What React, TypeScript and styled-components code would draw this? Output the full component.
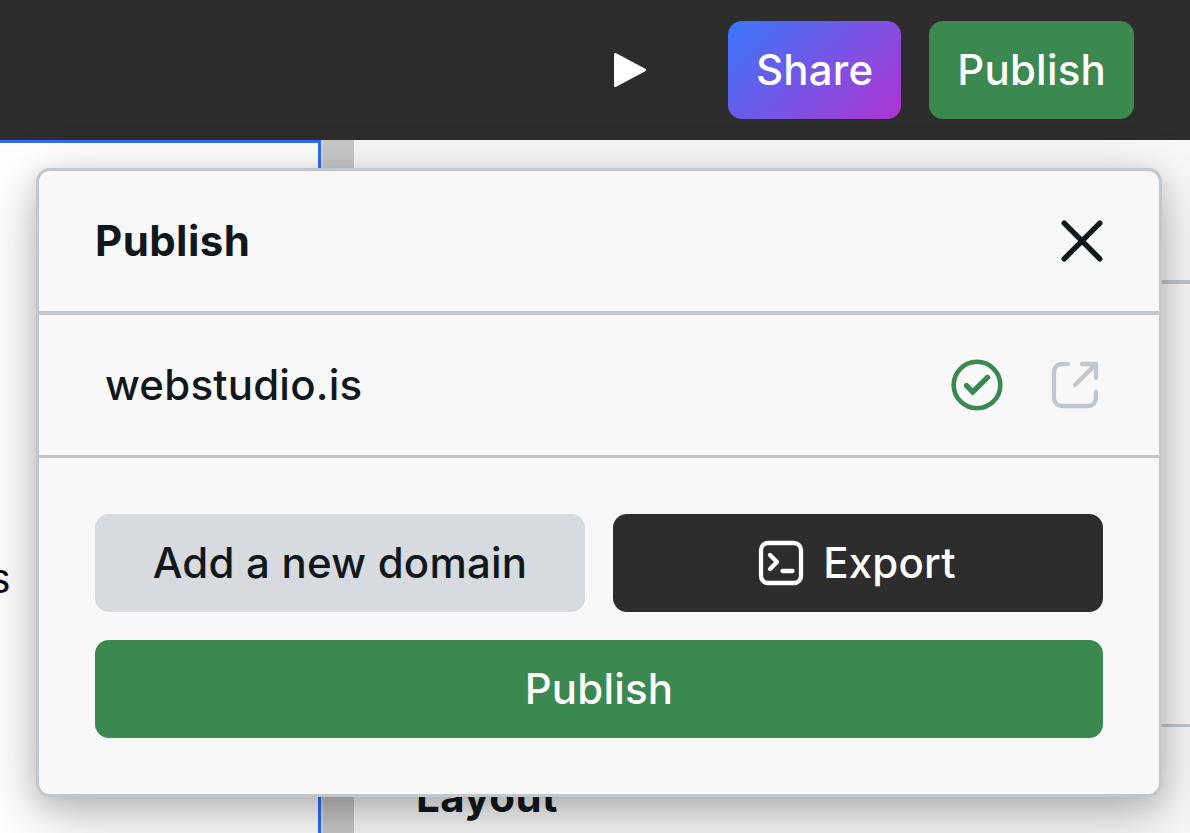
import React from "react";
import styled, { createGlobalStyle, css } from "styled-components";

const color = {
  bar: "#2d2d2d",
  panel: "#f8f8f8",
  line: "#c1c8cd",
  text: "#11181c",
  green: "#3b8850",
  neutral: "#d7dbdf",
  blue: "#2f6bff",
};

const GlobalStyle = createGlobalStyle`
  *, *::before, *::after { box-sizing: border-box; }
  body {
    margin: 0;
    overflow: hidden;
    font-family: Inter, "Liberation Sans", sans-serif;
    font-size: 42px;
    line-height: 56px;
    letter-spacing: 0.005em;
    color: ${color.text};
  }
`;

const Page = styled.div`
  position: relative;
  display: flex;
  flex-direction: column;
  height: 100vh;
  overflow: hidden;
`;

const Topbar = styled.header`
  display: flex;
  flex: none;
  align-items: center;
  justify-content: flex-end;
  gap: 28px;
  height: 140px;
  padding: 0 56px;
  background: ${color.bar};
`;

const IconButton = styled.button<{ $width: number }>`
  display: flex;
  align-items: center;
  justify-content: center;
  width: ${(p) => p.$width}px;
  height: 56px;
  padding: 0;
  border: 0;
  background: none;
  color: inherit;
`;

type Tone = "gradient" | "positive" | "neutral" | "dark";

const tones = {
  gradient: css`
    background: linear-gradient(135deg, #3a76fa 0%, #b035d2 100%);
    color: #fff;
  `,
  positive: css`
    background: ${color.green};
    color: #fff;
  `,
  neutral: css`
    background: ${color.neutral};
    color: ${color.text};
  `,
  dark: css`
    background: ${color.bar};
    color: #fff;
  `,
};

const Button = styled.button<{ $tone: Tone }>`
  display: flex;
  align-items: center;
  justify-content: center;
  gap: 7px;
  height: 98px;
  padding: 0 21px;
  border: 0;
  border-radius: 14px;
  font: inherit;
  font-weight: 500;
  letter-spacing: inherit;
  white-space: nowrap;
  ${(p) => tones[p.$tone]}
`;

const ButtonText = styled.span`
  padding: 0 7px;
`;

const Workspace = styled.main`
  display: flex;
  flex: 1;
  min-height: 0;
`;

const Canvas = styled.section`
  flex: 1;
  min-width: 0;
  overflow: hidden;
  padding-top: 408px;
  border-top: 3px solid ${color.blue};
  border-right: 3px solid ${color.blue};
  background: #fff;
`;

const CanvasText = styled.p`
  margin: 0 0 0 -11px;
  font-family: "Liberation Sans", sans-serif;
  color: #000;
`;

const Gutter = styled.div`
  flex: none;
  width: 32px;
  border-left: 2px solid #d5dbe0;
  background: #c8c8c8;
`;

const Sidebar = styled.aside`
  flex: none;
  width: 837px;
  border-left: 1px solid ${color.line};
  background: ${color.panel};
`;

const SidebarSection = styled.section<{ $height: number; $line: number }>`
  height: ${(p) => p.$height}px;
  padding: 42px 62px;
  border-bottom: ${(p) => p.$line}px solid ${color.line};
`;

const Heading = styled.h2`
  margin: 0;
  font-size: 42px;
  line-height: 56px;
  font-weight: 700;
  letter-spacing: 0.01em;
`;

const Popover = styled.div`
  position: absolute;
  top: 168px;
  left: 36px;
  right: 28px;
  border: 3px solid ${color.line};
  border-radius: 14px;
  background: ${color.panel};
  box-shadow: 0 7px 24px rgba(0, 0, 0, 0.12), 0 18px 60px rgba(0, 0, 0, 0.25);
`;

const PopoverHeader = styled.div`
  display: flex;
  align-items: center;
  justify-content: space-between;
  height: 144px;
  padding: 0 49px 0 56px;
  border-bottom: 4px solid ${color.line};
`;

const DomainRow = styled.div`
  display: flex;
  align-items: center;
  gap: 42px;
  height: 143px;
  padding: 0 56px 0 66px;
  border-bottom: 3px solid ${color.line};
`;

const DomainName = styled.span`
  flex: 1;
  font-weight: 500;
`;

const StatusIcon = styled.span`
  display: flex;
  color: ${color.green};
`;

const ExternalLink = styled.a`
  display: flex;
  color: ${color.line};
`;

const Actions = styled.div`
  display: grid;
  grid-template-columns: 1fr 1fr;
  gap: 28px;
  padding: 56px;

  & > :last-child {
    grid-column: 1 / -1;
  }
`;

const Svg = styled.svg.attrs({
  width: 56,
  height: 56,
  viewBox: "0 0 56 56",
  fill: "none",
  stroke: "currentColor",
  "aria-hidden": true,
})`
  display: block;
  flex: none;
`;

const PlayIcon = () => (
  <Svg>
    <path
      d="M13.5 12.5v31l29-15.500z"
      fill="#fff"
      stroke="#fff"
      strokeWidth="3"
      strokeLinejoin="round"
    />
  </Svg>
);

const CloseIcon = () => (
  <Svg strokeWidth="5.400" strokeLinecap="round">
    <path d="M10.200 10.200l35.600 35.600M45.800 10.200L10.200 45.800" />
  </Svg>
);

const CheckIcon = () => (
  <Svg strokeWidth="4.600">
    <circle cx="28" cy="28" r="23.300" />
    <path d="M17.500 28.700l6.200 6.200 14.800-14.600" strokeWidth="5.400" strokeLinecap="round" />
  </Svg>
);

const ExternalIcon = () => (
  <Svg strokeWidth="4.300" strokeLinecap="round" strokeLinejoin="round">
    <path d="M21 7h-6.500a7.500 8 0 0 0-7.500 8v26a8 8 0 0 0 8 8H41a8 8 0 0 0 8-8v-6M35 7h14v14M49 7L28 28" />
  </Svg>
);

const TerminalIcon = () => (
  <Svg strokeWidth="4.300" strokeLinecap="round" strokeLinejoin="round">
    <rect x="8" y="8" width="40" height="40" rx="7" />
    <path d="M17 20l7 7-7 7M29.500 36H39.500" />
  </Svg>
);

export default function App() {
  return (
    <Page>
      <GlobalStyle />
      <Topbar>
        <IconButton $width={140} aria-label="Preview">
          <PlayIcon />
        </IconButton>
        <Button $tone="gradient">
          <ButtonText>Share</ButtonText>
        </Button>
        <Button $tone="positive">
          <ButtonText>Publish</ButtonText>
        </Button>
      </Topbar>
      <Workspace>
        <Canvas>
          <CanvasText>s</CanvasText>
        </Canvas>
        <Gutter />
        <Sidebar>
          <SidebarSection $height={144} $line={4} />
          <SidebarSection $height={443} $line={3} />
          <SidebarSection $height={144} $line={4}>
            <Heading>Layout</Heading>
          </SidebarSection>
        </Sidebar>
      </Workspace>
      <Popover role="dialog" aria-labelledby="publish-title">
        <PopoverHeader>
          <Heading id="publish-title">Publish</Heading>
          <IconButton $width={56} aria-label="Close">
            <CloseIcon />
          </IconButton>
        </PopoverHeader>
        <DomainRow>
          <DomainName>webstudio.is</DomainName>
          <StatusIcon>
            <CheckIcon />
          </StatusIcon>
          <ExternalLink href="#" aria-label="Open webstudio.is">
            <ExternalIcon />
          </ExternalLink>
        </DomainRow>
        <Actions>
          <Button $tone="neutral">
            <ButtonText>Add a new domain</ButtonText>
          </Button>
          <Button $tone="dark">
            <TerminalIcon />
            <ButtonText>Export</ButtonText>
          </Button>
          <Button $tone="positive">
            <ButtonText>Publish</ButtonText>
          </Button>
        </Actions>
      </Popover>
    </Page>
  );
}
